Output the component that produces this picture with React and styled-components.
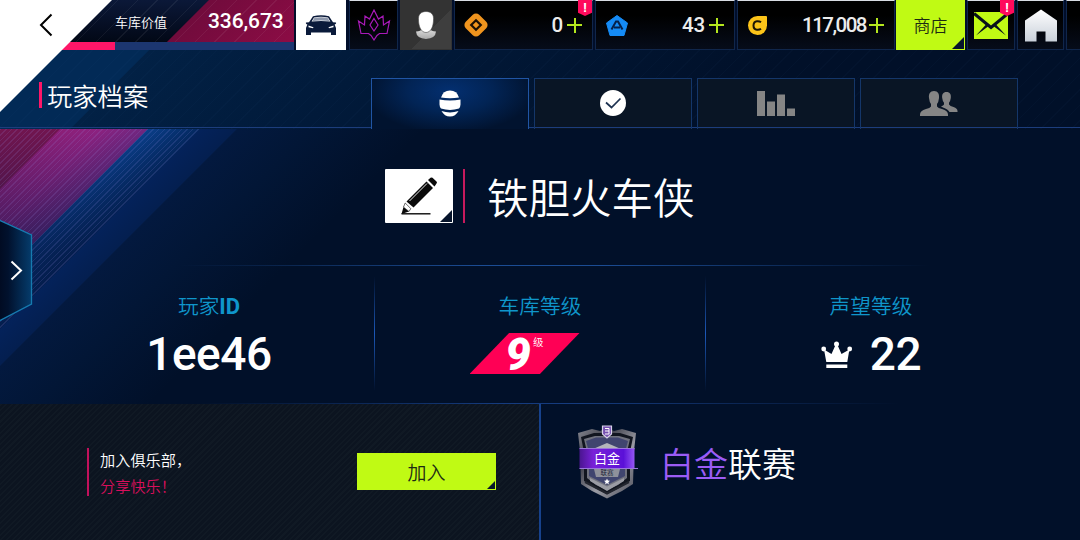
import React from 'react';
import styled, { createGlobalStyle, css } from 'styled-components';

const CarIcon = () => (
	<svg width='32' height='21' viewBox='0 0 32 21' fill='#0a1a3a'>
		<path d='M8 1.2Q16-.8 24 1.2L28 7.2 31 7.6Q31.500 9 29.600 9.600L31 13V20H26V17.500H6V20H1V13L2.400 9.600Q.5 9 1 7.600L4 7.200Z' />
		<path d='M9 2.400Q16 .9 23 2.400L25.400 6.500Q16 5.300 6.600 6.500Z' fill='#fff' />
		<path d='M9.500 2.800Q16 1.500 22.500 2.800L24.500 6Q16 5 7.500 6Z' fill='#8d97ab' />
		<path d='M3.500 10.500 8.500 12.300 8 13.200 3.500 12.300ZM28.500 10.500 23.500 12.300 24 13.200 28.500 12.300Z' fill='#fff' />
	</svg>
);

const EmblemIcon = () => (
	<svg width='34' height='32' viewBox='0 0 34 32' fill='none' stroke='#a81ab8' strokeWidth='1.200'>
		<path d='M17 1 21.500 10 26 7 26.500 16 32.500 12 30 24.500H22.500L20 26.500 17 31 14 26.500 11.500 24.500H4L1.500 12 7.500 16 8 7 12.500 10Z' />
		<path d='M17 9.500 21 16 17 22 13 16Z' />
	</svg>
);

const AvatarIcon = () => (
	<svg width='22' height='29' viewBox='0 0 22 29'>
		<defs>
			<linearGradient id='avatar' x2='0' y2='1'>
				<stop offset='0' stopColor='#ddd' />
				<stop offset='1' stopColor='#aaa' />
			</linearGradient>
		</defs>
		<path d='M1 20.500Q6 20 7 18H15Q16 20 21 20.500 20.500 27.500 11 28 1.500 27.500 1 20.500Z' fill='url(#avatar)' />
		<path
			d='M11 .5C16.500.5 19 4 18.500 9 18.500 14 16.500 21.500 11 21.500S3.500 14 3.500 9C3 4 5.500.5 11 .5Z'
			fill='#fff'
			stroke='#444'
			strokeWidth='.6'
		/>
	</svg>
);

const TokenIcon = () => (
	<svg width='24' height='24' viewBox='0 0 24 24'>
		<rect x='2.500' y='2.500' width='19' height='19' rx='4.500' transform='rotate(45 12 12)' fill='#ef941e' />
		<path d='M12 7.200 16.800 12 12 16.800 7.200 12Z' fill='none' stroke='#1c1005' strokeWidth='2.200' />
	</svg>
);

const PentagonIcon = () => (
	<svg width='23' height='21' viewBox='-1 0 23 21'>
		<path d='M11 .5 21.500 8 18 20.500H4L.5 8Z' fill='#158bf5' stroke='#158bf5' strokeLinejoin='round' />
		<path d='M5.500 14.500 10 6.500H12L16.500 14.500M8 12.500H14' fill='none' stroke='#05204a' strokeWidth='2' />
	</svg>
);

const CoinIcon = () => (
	<svg width='20' height='19' viewBox='-1 0 20 19'>
		<path d='M9.500 0H18Q19 0 19 1V9.500A9.500 9.500 0 1 1 9.500 0Z' fill='#fcc419' />
		<path d='M13 6.200Q11.500 5 9 5.200 5.500 5.600 5.500 9.500T9 13.800Q11.500 14 13 12.800' fill='none' stroke='#1c1505' strokeWidth='2' />
	</svg>
);

const MailIcon = () => (
	<svg width='34' height='27' viewBox='0 0 34 27'>
		<path d='M0 0H34V27H0Z' fill='#c0fa14' />
		<path d='M0 1.500 17 15.500 34 1.500' fill='none' stroke='#07101c' strokeWidth='3' />
		<path d='M2 23.500 12 12.500 14 14.500ZM32 23.500 22 12.500 20 14.500Z' fill='#07101c' />
	</svg>
);

const HomeIcon = () => (
	<svg width='34' height='33' viewBox='0 0 34 33'>
		<defs>
			<linearGradient id='home' x2='0' y2='1'>
				<stop offset='0' stopColor='#fff' />
				<stop offset='1' stopColor='#c9d0da' />
			</linearGradient>
		</defs>
		<path d='M17 .5 33 11.500V32.500H21.500V22.500H12.500V32.500H1V11.500Z' fill='url(#home)' />
	</svg>
);

const HelmetIcon = () => (
	<svg width='22' height='27' viewBox='0 0 22 27' fill='#fff'>
		<path d='M2 7.500Q4 .5 11 .5T20 7.500Q11 8.800 2 7.500Z' />
		<path d='M.5 9.500Q11 11.500 21.500 9.500V14.500Q21.300 17.500 20 18.500 11 21.300 2 18.500 .7 17.500 .5 14.500Z' />
		<path d='M2.500 21Q11 23.800 19.500 21 16.500 26.500 11 26.500T2.500 21Z' />
	</svg>
);

const CheckIcon = () => (
	<svg width='26' height='26' viewBox='0 0 26 26'>
		<circle cx='13' cy='13' r='13' fill='#fff' />
		<path d='M6 12.500 11.500 17.500 20.500 8.500' fill='none' stroke='#1c3150' strokeWidth='1.700' />
	</svg>
);

const ChartIcon = () => (
	<svg width='38' height='25' viewBox='0 0 38 25' fill='#858585'>
		<path d='M0 0H8V25H0ZM10 10.500H18V25H10ZM20 3.500H28V25H20ZM30 17.500H38V25H30Z' />
	</svg>
);

const FriendsIcon = () => (
	<svg width='38' height='25' viewBox='0 0 38 25' fill='#858585'>
		<path d='M14 0C18 0 19.500 3 19 7Q18.500 11.500 17 13V15.500Q18 17 22 18 28 19.500 28 23.500V25H0V23.500Q0 19.500 6 18 10 17 11 15.500V13Q9.500 11.500 9 7C8.500 3 10 0 14 0Z' />
		<path d='M26.500 1C30 1 31.300 3.500 30.800 7Q30.300 10.500 29 11.800V13.500Q30 15 33.500 16 37.500 17.300 37.500 20V21H29.500Q28 18.300 23 16.500L21 15.500Q23.500 14.500 24 13.500V11.800Q22.700 10.500 22.200 7C21.700 3.500 23 1 26.500 1Z' />
	</svg>
);

const PencilIcon = () => (
	<svg width='38' height='39' viewBox='0 0 38 39' fill='#0a0a0a'>
		<path d='M26.500 4.500 33 11 13.500 30.500 6.500 24.500Z' />
		<path d='M28 3 30.500.8Q31.500 0 32.500.8L36.500 4.500Q37.500 5.500 36.500 6.500L34.500 9.500Z' />
		<path d='M3.500 30 9 34.500 1.500 37Z' />
		<path d='M5.200 26 10.800 31.600 9 34.500 3.500 30Z' fill='#fff' stroke='#0a0a0a' strokeWidth='.6' />
		<path d='M9.500 24 27 6.500' stroke='#fff' strokeWidth='.9' />
		<path d='M1.500 36.800H30.500' stroke='#0a0a0a' strokeWidth='1.400' />
	</svg>
);

const CrownIcon = () => (
	<svg width='32' height='28' viewBox='0 0 32 28' fill='#fff'>
		<circle cx='2.700' cy='8' r='2.400' />
		<circle cx='15.500' cy='3' r='2.500' />
		<circle cx='28.700' cy='8' r='2.400' />
		<path d='M3 8.500 10.500 13 14.500 4H16.500L20.500 13 28.400 8.500 26.300 21H5.300Z' />
		<path d='M5.300 23.500H26.300V27H5.300Z' />
	</svg>
);

const LeagueBadge = () => (
	<svg width='62' height='76' viewBox='0 0 62 76'>
		<defs>
			<linearGradient id='steel' x2='1' y2='1'>
				<stop offset='0' stopColor='#85868f' />
				<stop offset='.3' stopColor='#3f404b' />
				<stop offset='.6' stopColor='#9a9ba4' />
				<stop offset='1' stopColor='#4b4c57' />
			</linearGradient>
			<linearGradient id='ribbon'>
				<stop offset='0' stopColor='#4a1590' />
				<stop offset='.25' stopColor='#7921d8' />
				<stop offset='.8' stopColor='#5b10d8' />
				<stop offset='1' stopColor='#9557f4' />
			</linearGradient>
		</defs>
		<path d='M2 8 16 4 24 6 31 3 38 6 46 4 60 8 58 26 57 59 46 66 31 73.500 16 66 5 59 4 26Z' fill='url(#steel)' />
		<path d='M5 12 18 8H44L57 12 54 27V56L43 63 31 69 19 63 8 56V27Z' fill='#11151f' />
		<path d='M8 14 19 11H43L54 14 51 27V53L42 60 31 65 20 60 11 53V27Z' fill='#70727e' />
		<path d='M10 16 20 12.500H42L52 16 49 27V51L31 60 13 51V27Z' fill='#40456f' />
		<path d='M17 24 31 18 45 24Z' fill='#b4b5bb' />
		<path d='M18 44H44L42 52H20Z' fill='#8f919b' />
		<path d='M14 53 31 61.500 48 53V56L31 66 14 56Z' fill='#9b9ca4' />
		<path d='M9 57 31 68.500 53 57' fill='none' stroke='#22252e' strokeWidth='2' />
		<path d='M3.500 23H58.500V44H3.500Z' fill='url(#ribbon)' />
		<path d='M3.500 23.500H58.500M3.500 43.500H62' stroke='#9a76da' />
		<path d='M26.500 1H35.500V9L31 13 26.500 9Z' fill='#7650b0' stroke='#d8d2ea' strokeWidth='1.200' />
		<path d='M29 3.500H33V9M29 6H33M29 9H33' stroke='#fff' strokeWidth='1' fill='none' />
		<path d='M31 53.500 31.900 55.600 34 55.800 32.400 57.200 32.900 59.300 31 58.200 29.100 59.300 29.600 57.200 28 55.800 30.100 55.600Z' fill='#fff' />
		<BadgeText x='31' y='38' fontSize='13' fill='#fff'>白金</BadgeText>
		<BadgeText x='31' y='50' fontSize='6.500' fill='#1b1f36'>联赛</BadgeText>
	</svg>
);

const CURRENCIES = [
	{ id: 'tokens', amount: '0', icon: <TokenIcon />, width: 139, alert: true },
	{ id: 'credits', amount: '43', icon: <PentagonIcon />, width: 140 },
	{ id: 'coins', amount: '117,008', icon: <CoinIcon />, width: 158, tight: true },
];

const TABS = [
	{ id: 'profile', icon: <HelmetIcon />, active: true },
	{ id: 'achievements', icon: <CheckIcon /> },
	{ id: 'stats', icon: <ChartIcon /> },
	{ id: 'friends', icon: <FriendsIcon /> },
];

export default function App() {
	return (
		<Screen>
			<GlobalStyle />
			<TopBar>
				<GarageValue>
					<GarageTop>
						<GarageLabel>车库价值</GarageLabel>
						<GarageNumber>336,673</GarageNumber>
					</GarageTop>
					<Progress />
				</GarageValue>
				<CarButton>
					<CarIcon />
				</CarButton>
				<Cell $width={49}>
					<EmblemIcon />
				</Cell>
				<AvatarCell $width={52}>
					<AvatarIcon />
				</AvatarCell>
				{CURRENCIES.map((c) => (
					<Currency key={c.id} $width={c.width}>
						<CurrencyIcon>{c.icon}</CurrencyIcon>
						<Amount $tight={c.tight}>{c.amount}</Amount>
						<Plus />
						{c.alert && <Alert>!</Alert>}
					</Currency>
				))}
				<ShopButton>商店</ShopButton>
				<Cell $width={48}>
					<MailIcon />
					<Alert>!</Alert>
				</Cell>
				<Cell $width={47}>
					<HomeIcon />
				</Cell>
				<Cell $width={20} />
			</TopBar>

			<Header>
				<Title>玩家档案</Title>
				<Tabs>
					{TABS.map((t) => (
						<Tab key={t.id} $active={t.active}>
							{t.icon}
						</Tab>
					))}
				</Tabs>
			</Header>

			<Main>
				<NameRow>
					<EditButton>
						<PencilIcon />
					</EditButton>
					<PlayerName>铁胆火车侠</PlayerName>
				</NameRow>
				<Stats>
					<Stat>
						<StatLabel>
							玩家<b>ID</b>
						</StatLabel>
						<StatValue>1ee46</StatValue>
					</Stat>
					<Stat>
						<StatLabel>车库等级</StatLabel>
						<LevelTag>
							<LevelNumber>9</LevelNumber>
							<LevelUnit>级</LevelUnit>
						</LevelTag>
					</Stat>
					<Stat>
						<StatLabel>声望等级</StatLabel>
						<StatValue>
							<CrownIcon />
							22
						</StatValue>
					</Stat>
				</Stats>
				<Bottom>
					<Club>
						<ClubText>
							<span>加入俱乐部，</span>
							<ClubAccent>分享快乐！</ClubAccent>
						</ClubText>
						<JoinButton>加入</JoinButton>
					</Club>
					<League>
						<LeagueBadge />
						<LeagueName>
							<em>白金</em>联赛
						</LeagueName>
					</League>
				</Bottom>
			</Main>

			<BackButton>
				<svg width='14' height='24' viewBox='0 0 14 24' fill='none' stroke='#000' strokeWidth='2'>
					<path d='M12.500 1.500 2 12 12.500 22.500' />
				</svg>
			</BackButton>
			<Drawer>
				<svg width='33' height='104' viewBox='0 0 33 104'>
					<defs>
						<linearGradient id='drawer'>
							<stop offset='0' stopColor='#010a20' />
							<stop offset='.3' stopColor='#01112d' />
							<stop offset='1' stopColor='#053c6c' />
						</linearGradient>
					</defs>
					<path d='M-2 .5 31.500 16V85L-2 102.500Z' fill='url(#drawer)' stroke='#167bb0' strokeWidth='1.300' />
					<path d='M11.500 42.500 21 51.500 11.500 60.500' fill='none' stroke='#fff' strokeWidth='2' />
				</svg>
			</Drawer>
		</Screen>
	);
}

const GlobalStyle = createGlobalStyle`
	body {
		margin: 0;
		background: #011029;
	}
	* {
		box-sizing: border-box;
	}
	svg {
		display: block;
		flex: none;
	}
`;

const numberFont = css`
	font-family: Roboto, 'Noto Sans CJK SC', sans-serif;
	font-weight: 500;
`;

const cutCorner = css`
	&::after {
		content: '';
		position: absolute;
		right: 1px;
		bottom: 1px;
		width: ${(p) => p.$cut || 12}px;
		height: ${(p) => p.$cut || 12}px;
		background: #06142b;
		clip-path: polygon(100% 0, 100% 100%, 0 100%);
	}
`;

const Screen = styled.div`
	position: relative;
	display: flex;
	flex-direction: column;
	width: 1080px;
	height: 540px;
	overflow: hidden;
	color: #fff;
	font-family: 'Noto Sans CJK SC', sans-serif;
	font-weight: 350;
	background: #011029;
`;

const TopBar = styled.div`
	display: flex;
	gap: 2px;
	height: 50px;
	background: #010e2a;
`;

const GarageValue = styled.div`
	width: 294px;
	flex: none;
`;

const GarageTop = styled.div`
	display: flex;
	align-items: center;
	height: 42px;
	padding-left: 115px;
	background: repeating-linear-gradient(135deg, transparent 0 13px, rgba(255, 255, 255, 0.06) 13px 14px),
		linear-gradient(135deg, transparent 147.500px, #710b3c 148px, #8d0c45 240px),
		linear-gradient(#0b1838, #020816);
`;

const GarageLabel = styled.div`
	width: 93px;
	font-size: 13px;
	line-height: 20px;
	padding-top: 1px;
`;

const GarageNumber = styled.div`
	${numberFont}
	font-size: 21px;
	line-height: 42px;
	letter-spacing: -0.100px;
`;

const Progress = styled.div`
	height: 8px;
	background: linear-gradient(90deg, #ff1668 115px, #1c3670 115px);
`;

const Cell = styled.div`
	position: relative;
	display: flex;
	align-items: center;
	justify-content: center;
	flex: none;
	width: ${(p) => p.$width}px;
	height: 50px;
	border: 1px solid #10264b;
	border-top-color: #d9dde4;
	background: linear-gradient(#000 30%, #060c1a);
`;

const CarButton = styled(Cell)`
	width: 50px;
	margin-right: 1px;
	border: 0;
	background: #fff;
`;

const AvatarCell = styled(Cell)`
	border-color: #333;
	background: linear-gradient(135deg, #333 60%, #3e3e3e 60%);
`;

const Currency = styled(Cell)`
	justify-content: flex-start;
	padding: 0 10px 0 9px;
`;

const CurrencyIcon = styled.div`
	margin-right: auto;
`;

const Amount = styled.div`
	${numberFont}
	font-size: 20.500px;
	line-height: 48px;
	letter-spacing: ${(p) => (p.$tight ? -1.5 : -0.2)}px;
	margin-right: ${(p) => (p.$tight ? 3 : 4)}px;
	color: #ececec;
`;

const Plus = styled.div`
	width: 15px;
	height: 15px;
	background: linear-gradient(#b4e61e, #b4e61e) center / 15px 2px no-repeat,
		linear-gradient(#b4e61e, #b4e61e) center / 2px 15px no-repeat;
`;

const Alert = styled.div`
	position: absolute;
	top: -1px;
	right: 0;
	width: 14px;
	height: 16px;
	background: #ff0a5c;
	clip-path: polygon(0 0, 100% 0, 100% 80%, 50% 100%, 0 80%);
	${numberFont}
	font-weight: 700;
	font-size: 13px;
	line-height: 15px;
	text-align: center;
`;

const ShopButton = styled.div`
	position: relative;
	flex: none;
	width: 69px;
	height: 50px;
	margin-left: -1px;
	background: #c0fa14;
	color: #1c2a12;
	font-size: 17px;
	line-height: 50px;
	text-align: center;
	${cutCorner}
`;

const Header = styled.div`
	display: flex;
	align-items: flex-end;
	height: 79px;
	background: linear-gradient(#1c3d7c, #1c3d7c) 0 77px / 100% 1px no-repeat,
		repeating-linear-gradient(135deg, transparent 0 10px, rgba(60, 110, 170, 0.035) 10px 11px),
		linear-gradient(135deg, #022a56 105px, #022145 106px, #011a3a 270px, #011029 560px);
`;

const Title = styled.h1`
	width: 371px;
	margin: 0;
	padding: 0 0 21px 39px;
	font-size: 25.300px;
	font-weight: inherit;
	line-height: 26px;
	display: flex;
	align-items: center;
	&::before {
		content: '';
		width: 3px;
		height: 26px;
		margin-right: 5px;
		background: #ff1668;
	}
`;

const Tabs = styled.div`
	display: flex;
	gap: 5px;
`;

const Tab = styled.div`
	display: flex;
	align-items: center;
	justify-content: center;
	width: 158px;
	height: 51px;
	padding-bottom: 2px;
	border: 1px solid #143669;
	border-bottom: 0;
	background: linear-gradient(#1c3d7c, #1c3d7c) 0 48px / 100% 1px no-repeat, #091525;
	${(p) =>
		p.$active &&
		css`
			border-color: #2055a4;
			background: radial-gradient(ellipse 85px 42px at 50% 12px, #032f70, #022455 50%, #01132f);
		`}
`;

/* diagonal magenta and blue bands, thin stripes only over the first 142px */
const Main = styled.div`
	flex: 1;
	display: flex;
	flex-direction: column;
	background: linear-gradient(
			135deg,
			transparent 141px,
			#04225a 142px,
			#041f50 167px,
			#03193f 168px,
			#021636 220px,
			#011029 300px
		),
		repeating-linear-gradient(135deg, rgba(150, 140, 230, 0.150) 0 1px, transparent 1px 4px),
		linear-gradient(rgba(4, 22, 64, 0), rgba(4, 22, 64, 0.600) 125px),
		linear-gradient(
			135deg,
			#71154f 42px,
			#8d1f78 43px,
			#8d2280 70px,
			#6f2780 104px,
			#0a3f8a 105px,
			#04285f 142px
		);
`;

const NameRow = styled.div`
	display: flex;
	align-items: center;
	height: 137px;
	padding: 0 0 3px 385px;
	background: linear-gradient(90deg, transparent 180px, #1b4c94 480px, #1b4c94 600px, transparent 930px) 0 136px /
		100% 1px no-repeat;
`;

const EditButton = styled.div`
	position: relative;
	display: flex;
	align-items: center;
	justify-content: center;
	width: 68px;
	height: 54px;
	margin-right: 10px;
	padding: 0 1px 0 0;
	border-radius: 1px;
	background: #fff;
	${cutCorner}
`;

const PlayerName = styled.div`
	height: 54px;
	padding-left: 22px;
	border-left: 2px solid #c61a5d;
	font-size: 41.500px;
	line-height: 55px;
`;

const Stats = styled.div`
	display: grid;
	grid-template-columns: repeat(3, 331px);
	height: 138px;
	padding-left: 43px;
	background: linear-gradient(90deg, transparent 200px, #153b7e 500px, #153b7e 580px, transparent 900px) 0 137px /
		100% 1px no-repeat;
`;

const Stat = styled.div`
	display: flex;
	flex-direction: column;
	align-items: center;
	padding: 25px 0 0 1px;
	& + & {
		background: linear-gradient(transparent, #1c58b8 50%, transparent) 0 10px / 1px 115px no-repeat;
	}
`;

const StatLabel = styled.div`
	height: 28px;
	font-size: 20.700px;
	line-height: 29px;
	color: #0f96cb;
	b {
		font-family: Roboto, sans-serif;
		font-weight: 700;
		font-size: 22px;
		line-height: 20px;
	}
`;

const StatValue = styled.div`
	${numberFont}
	display: flex;
	align-items: center;
	gap: 17px;
	height: 70px;
	font-size: 46px;
	letter-spacing: -0.400px;
	svg {
		margin-top: 1px;
	}
`;

const LevelTag = styled.div`
	display: flex;
	justify-content: center;
	width: 110px;
	height: 41px;
	margin: 14px 0 0 -31px;
	background: #ff0055;
	clip-path: polygon(36% 0, 100% 0, 64% 100%, 0 100%);
`;

const LevelNumber = styled.div`
	font-family: Roboto, sans-serif;
	font-weight: 900;
	font-style: italic;
	font-size: 45px;
	line-height: 43px;
`;

const LevelUnit = styled.div`
	margin-left: 2px;
	font-size: 10.500px;
	line-height: 18px;
`;

const Bottom = styled.div`
	flex: 1;
	display: flex;
`;

const Club = styled.div`
	display: flex;
	align-items: center;
	width: 541px;
	padding: 0 43px 0 87px;
	border-right: 2px solid #17428c;
	background: repeating-linear-gradient(135deg, #101924 0 1.500px, #0c1420 1.500px 4px);
`;

const ClubText = styled.div`
	display: flex;
	flex-direction: column;
	justify-content: center;
	height: 48px;
	margin-right: auto;
	padding-left: 11px;
	border-left: 2px solid #c1115c;
	font-size: 15.200px;
	line-height: 26px;
`;

const ClubAccent = styled.span`
	color: #d80f5c;
`;

const JoinButton = styled.div.attrs({ $cut: 8 })`
	position: relative;
	width: 139px;
	height: 37px;
	margin-bottom: 1px;
	background: #c0fa14;
	color: #1d2a14;
	font-size: 19px;
	line-height: 38px;
	text-align: center;
	${cutCorner}
`;

const League = styled.div`
	flex: 1;
	display: flex;
	align-items: center;
	gap: 22px;
	padding: 0 0 18px 35px;
`;

const LeagueName = styled.div`
	font-size: 34px;
	line-height: 40px;
	em {
		font-style: normal;
		color: #9b5cf6;
	}
`;

const BadgeText = styled.text`
	font-family: 'Noto Sans CJK SC', sans-serif;
	font-weight: 400;
	text-anchor: middle;
`;

const BackButton = styled.div`
	position: absolute;
	top: 0;
	left: 0;
	width: 112px;
	height: 112px;
	padding: 13px 0 0 39px;
	background: #fff;
	clip-path: polygon(0 0, 100% 0, 0 100%);
`;

const Drawer = styled.div`
	position: absolute;
	top: 219px;
	left: 0;
`;
